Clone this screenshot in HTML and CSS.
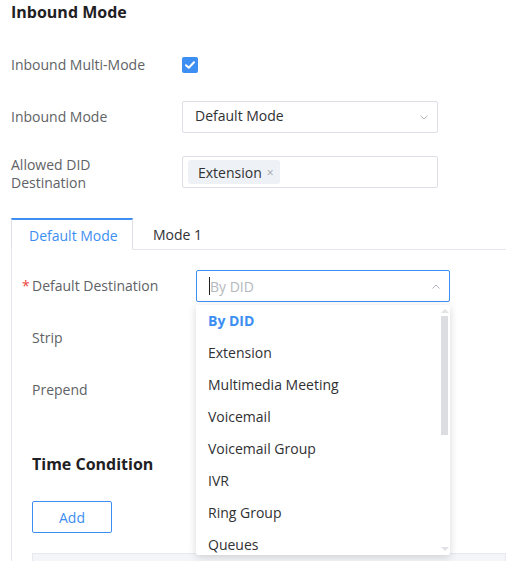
FILE: index.html
```html
<!DOCTYPE html>
<html lang="en">

<head>
    <meta charset="UTF-8">
    <meta name="viewport" content="width=device-width, initial-scale=1.0">
    <title>Inbound Mode</title>
    <link rel="stylesheet" href="styles.css">
</head>

<body>
    <div class="page">
        <!-- Inbound Mode -->
        <h2 class="section-title">Inbound Mode</h2>

        <div class="form-row first">
            <div class="form-label">Inbound Multi-Mode</div>
            <div class="form-control">
                <span class="checkbox">
                    <svg width="10" height="8" viewBox="0 0 10 8"><path d="M1 4.2 L3.8 6.8 L9 1.2" fill="none" stroke="#fff" stroke-width="2" stroke-linecap="round" stroke-linejoin="round"/></svg>
                </span>
            </div>
        </div>

        <div class="form-row">
            <div class="form-label">Inbound Mode</div>
            <div class="form-control">
                <div class="select">
                    <span class="select-value">Default Mode</span>
                    <svg class="chevron" width="8" height="5" viewBox="0 0 8 5"><path d="M0.5 0.5 L4 4 L7.5 0.5" fill="none" stroke="#b4b7bd" stroke-width="1"/></svg>
                </div>
            </div>
        </div>

        <div class="form-row tall-gap">
            <div class="form-label two-line">Allowed DID<br>Destination</div>
            <div class="form-control">
                <div class="select tags">
                    <span class="tag">Extension <span class="tag-close">&times;</span></span>
                </div>
            </div>
        </div>

        <!-- Tabs -->
        <div class="tab-bar">
            <div class="tab active">Default Mode</div>
            <div class="tab">Mode 1</div>
        </div>

        <div class="tab-panel">
            <div class="form-row">
                <div class="form-label"><span class="req">*</span>Default Destination</div>
                <div class="form-control wide">
                    <div class="select focused">
                        <span class="caret"></span>
                        <span class="placeholder">By DID</span>
                        <svg class="chevron up" width="8" height="5" viewBox="0 0 8 5"><path d="M0.5 4.5 L4 1 L7.5 4.5" fill="none" stroke="#b4b7bd" stroke-width="1"/></svg>
                    </div>

                    <!-- Dropdown -->
                    <div class="dropdown">
                        <ul class="dropdown-list">
                            <li class="selected">By DID</li>
                            <li>Extension</li>
                            <li>Multimedia Meeting</li>
                            <li>Voicemail</li>
                            <li>Voicemail Group</li>
                            <li>IVR</li>
                            <li>Ring Group</li>
                            <li>Queues</li>
                        </ul>
                        <div class="scrollbar">
                            <span class="arrow-up"></span>
                            <span class="thumb"></span>
                            <span class="arrow-down"></span>
                        </div>
                    </div>
                </div>
            </div>

            <div class="form-row">
                <div class="form-label"><span class="req"></span>Strip</div>
            </div>

            <div class="form-row">
                <div class="form-label"><span class="req"></span>Prepend</div>
            </div>

            <div class="time-condition">
                <h3 class="sub-title">Time Condition</h3>
                <button class="btn">Add</button>
                <div class="table-head"></div>
            </div>
        </div>
    </div>
</body>

</html>
```

FILE: styles.css
```css
body {
    margin: 0;
    padding: 0;
    background-color: #fff;
    font-family: "Open Sans", "Noto Sans", sans-serif;
    font-size: 14px;
    color: #303133;
    overflow: hidden;
}

.page {
    padding-left: 11px;
}

.section-title {
    margin: 0;
    font-size: 16px;
    font-weight: 700;
    line-height: 24px;
    color: #1f2023;
}

.form-row {
    display: flex;
    align-items: center;
    height: 32px;
    margin-top: 20px;
}

.form-row.first {
    margin-top: 25px;
}

.form-row.tall-gap {
    margin-top: 23px;
}

.form-label {
    width: 171px;
    flex-shrink: 0;
    color: #606266;
    line-height: 20px;
}

.form-label.two-line {
    line-height: 18px;
    padding-top: 3px;
}

.form-control {
    width: 256px;
    position: relative;
}

.checkbox {
    display: flex;
    align-items: center;
    justify-content: center;
    width: 16px;
    height: 16px;
    border-radius: 2px;
    background-color: #3d8ef2;
}

.select {
    box-sizing: border-box;
    display: flex;
    align-items: center;
    height: 32px;
    padding: 0 12px;
    border: 1px solid #dcdfe6;
    border-radius: 2px;
    background: #fff;
}

.select-value {
    flex: 1;
    color: #303133;
    line-height: 18px;
    margin-top: -2px;
}

.chevron {
    margin-right: -3px;
}

.select.tags {
    padding: 0 5px;
}

.tag {
    display: inline-flex;
    align-items: center;
    height: 24px;
    padding: 0 6px 0 10px;
    border-radius: 3px;
    background-color: #eef1f6;
    color: #303133;
}

.tag-close {
    margin-left: 5px;
    font-size: 12px;
    color: #a0a4ab;
}

/* Tabs */
.tab-bar {
    display: flex;
    height: 31px;
    margin-top: 30px;
    border-bottom: 1px solid #e4e7ed;
}

.tab {
    box-sizing: border-box;
    height: 32px;
    line-height: 34px;
    padding: 0 20px;
    color: #303133;
}

.tab.active {
    width: 122px;
    padding: 0 0 0 17px;
    border: 1px solid #dcdfe6;
    border-top: 2px solid #3d8ef2;
    border-bottom: 1px solid #fff;
    color: #3d8ef2;
    line-height: 31px;
}

.tab-panel {
    border-left: 1px solid #e4e7ed;
    padding: 20px 0 0 10px;
}

.tab-panel .form-row:first-child {
    margin-top: 0;
}

.tab-panel .form-label {
    width: 174px;
}

.req {
    display: inline-block;
    width: 10px;
    color: #f0443c;
}

.form-control.wide {
    width: 254px;
}

.select.focused {
    border-color: #3d8ef2;
}

.caret {
    width: 1px;
    height: 18px;
    background: #222;
}

.placeholder {
    flex: 1;
    color: #b5b8be;
}

/* Dropdown */
.dropdown {
    position: absolute;
    top: 35px;
    left: 0;
    z-index: 10;
    display: flex;
    width: 254px;
    height: 250px;
    overflow: hidden;
    background: #fff;
    border-radius: 2px;
    box-shadow: 0 2px 8px rgba(0, 0, 0, 0.16);
}

.dropdown-list {
    flex: 1;
    list-style: none;
    margin: 0;
    padding: 0;
}

.dropdown-list li {
    height: 32px;
    line-height: 32px;
    padding-left: 12px;
    color: #303133;
}

.dropdown-list li.selected {
    color: #3d8ef2;
    font-weight: 700;
}

.scrollbar {
    display: flex;
    flex-direction: column;
    align-items: center;
    width: 7px;
    margin-right: 2px;
    padding-top: 4px;
}

.arrow-up,
.arrow-down {
    width: 0;
    height: 0;
    border-left: 4px solid transparent;
    border-right: 4px solid transparent;
}

.arrow-up {
    border-bottom: 4px solid #e1e2e6;
}

.arrow-down {
    margin-top: auto;
    margin-bottom: 4px;
    border-top: 4px solid #e1e2e6;
}

.thumb {
    width: 7px;
    height: 119px;
    margin-top: 3px;
    background: #dcdde1;
}

.time-condition {
    padding-left: 10px;
}

.sub-title {
    margin: 46px 0 0;
    font-size: 16px;
    font-weight: 700;
    line-height: 24px;
    color: #1f2023;
}

.btn {
    display: block;
    box-sizing: border-box;
    width: 80px;
    height: 32px;
    margin-top: 25px;
    border: 1px solid #3d8ef2;
    border-radius: 2px;
    background: #fff;
    color: #3d8ef2;
    font-family: inherit;
    font-size: 14px;
}

.table-head {
    height: 40px;
    margin-top: 20px;
    border: 1px solid #e7e9ee;
    background: #f4f5f8;
}
```
